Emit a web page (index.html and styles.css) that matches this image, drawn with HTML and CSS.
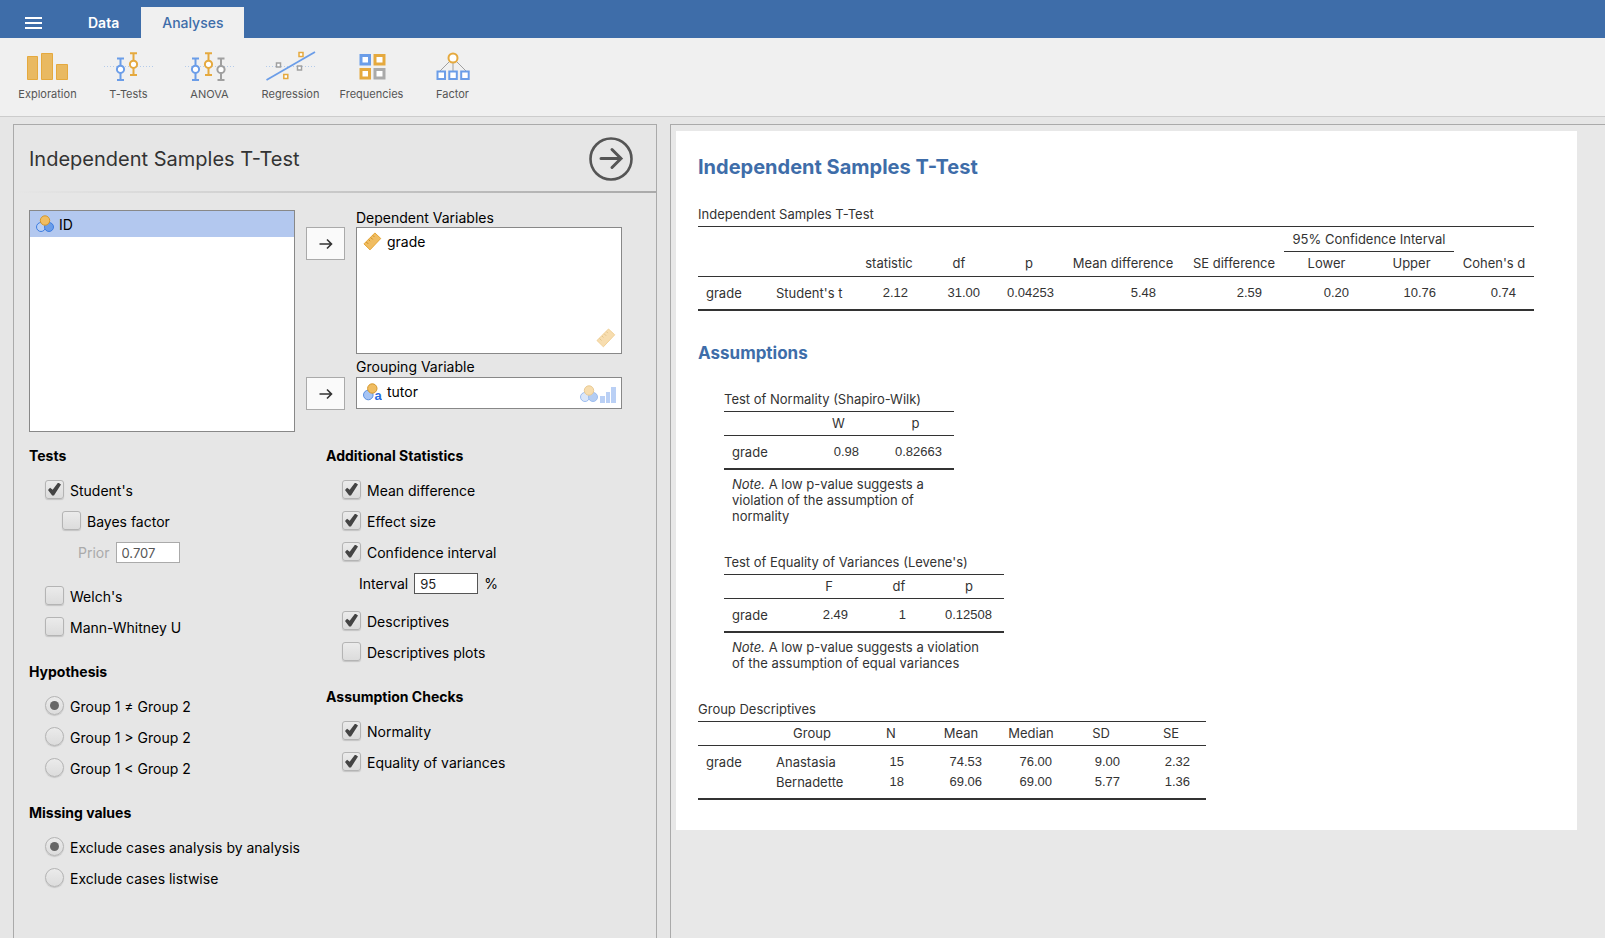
FILE: index.html
```html
<!DOCTYPE html>
<html lang="en">
<head>
    <meta charset="UTF-8">
    <meta name="viewport" content="width=device-width, initial-scale=1.0">
    <title>Independent Samples T-Test</title>
    <link rel="stylesheet" href="styles.css">
</head>
<body>
    <!-- shared icons -->
    <svg class="defs" width="0" height="0" aria-hidden="true">
        <symbol id="arrow" viewBox="0 0 14 12">
            <path d="M0.5 6H12.5M8 1.5L12.5 6L8 10.5" fill="none" stroke="#333" stroke-width="1.6"/>
        </symbol>
        <symbol id="nominal" viewBox="0 0 18 18">
            <circle cx="5" cy="12" r="4.5" fill="#b9d0f5" stroke="#3e7de0"/>
            <circle cx="13" cy="12" r="4.5" fill="#6b9de8" stroke="#3e7de0"/>
            <circle cx="9" cy="5.5" r="4.7" fill="#f0bd62" stroke="#d4972c"/>
        </symbol>
        <symbol id="ruler" viewBox="0 0 20 20">
            <path d="M1 12.5L12.5 1L18.7 6.8L7.4 18.8Z" fill="#f0bd62" stroke="#e5a22e"/>
            <path d="M3.5 10.5l2 2M6 8l1.5 1.5M8.2 5.8l2 2M10.4 3.6l1.5 1.5" fill="none" stroke="#c98a1c"/>
        </symbol>
        <symbol id="ordinal" viewBox="0 0 16 16">
            <path d="M0 9h5v7H0zM6 5h4v11H6zM11 0h5v16h-5z" fill="#77a3ec"/>
        </symbol>
    </svg>

    <header class="topbar">
        <button class="menu" aria-label="Menu">
            <svg width="17" height="12" viewBox="0 0 17 12"><path d="M0 1h17M0 6h17M0 11h17" stroke="#fff" stroke-width="2"/></svg>
        </button>
        <button class="tab">Data</button>
        <button class="tab active">Analyses</button>
    </header>

    <nav class="ribbon">
        <button>
            <svg width="50" height="30" viewBox="0 0 50 30">
                <g fill="#e9b961" stroke="#e5a93e">
                    <path d="M4.5 5.5h10v23h-10zM18.5 2.5h11v26h-11zM33.5 13.5h11v15h-11z"/>
                </g>
            </svg>
            Exploration
        </button>
        <button>
            <svg width="50" height="30" viewBox="0 0 50 30">
                <path d="M0 15.5h50" stroke="#b4cbea" stroke-dasharray="1 2"/>
                <g fill="#fff" stroke="#6b9de8" stroke-width="2">
                    <path d="M16.5 7v22M13 7.5h7M13 29h7"/>
                    <circle cx="16.5" cy="18.3" r="3.6"/>
                </g>
                <g fill="#fff" stroke="#e5a93e" stroke-width="2">
                    <path d="M29.5 2v22M26 2.2h7M26 24h7"/>
                    <circle cx="29.5" cy="13.3" r="3.6"/>
                </g>
            </svg>
            T-Tests
        </button>
        <button>
            <svg width="50" height="30" viewBox="0 0 50 30">
                <path d="M0 15.5h50" stroke="#b4cbea" stroke-dasharray="1 2"/>
                <g fill="#fff" stroke="#6b9de8" stroke-width="2">
                    <path d="M10.5 7v22M7 7.5h7M7 29h7"/>
                    <circle cx="10.5" cy="18.3" r="3.6"/>
                </g>
                <g fill="#fff" stroke="#e5a93e" stroke-width="2">
                    <path d="M23.5 2v22M20 2.2h7M20 24h7"/>
                    <circle cx="23.5" cy="13.3" r="3.6"/>
                </g>
                <g fill="#fff" stroke="#a0a0a0" stroke-width="2">
                    <path d="M36 7v22M32.5 7.5h7M32.5 29h7"/>
                    <circle cx="36" cy="18.5" r="3.6"/>
                </g>
            </svg>
            ANOVA
        </button>
        <button>
            <svg width="50" height="30" viewBox="0 0 50 30">
                <path d="M0 15.5h50" stroke="#b4cbea" stroke-dasharray="1 2"/>
                <path d="M0.5 29L49 1" stroke="#6b9de8" stroke-width="1.8"/>
                <g fill="#fff" stroke-width="1.5">
                    <path d="M10.5 12h4v4h-4zM31.5 15h4v4h-4z" stroke="#a0a0a0"/>
                    <path d="M33 1.5h4v4h-4zM17.8 23.5h4v4h-4z" stroke="#e5a93e"/>
                </g>
            </svg>
            Regression
        </button>
        <button>
            <svg width="50" height="30" viewBox="0 0 50 30">
                <g fill="#fff" stroke-width="3">
                    <path d="M14 4.5h8.5v8.5h-8.5z" stroke="#6b9de8"/>
                    <path d="M28 4.5h9v8.5h-9zM14 18.5h8.5v8.5h-8.5z" stroke="#e5a93e"/>
                    <path d="M28 18.5h9v8.5h-9z" stroke="#aaa"/>
                </g>
            </svg>
            Frequencies
        </button>
        <button>
            <svg width="50" height="30" viewBox="0 0 50 30">
                <path d="M25 8v12M23 9L12 20M27 9L38 20" stroke="#a0a0a0"/>
                <circle cx="25" cy="7" r="4.5" fill="#fff" stroke="#e5a93e" stroke-width="2"/>
                <path d="M9.5 20.5h7.5v7.5h-7.5zM21.3 20.5h7.5v7.5h-7.5zM33.2 20.5h7.5v7.5h-7.5z" fill="#fff" stroke="#6b9de8" stroke-width="2"/>
            </svg>
            Factor
        </button>
    </nav>

    <main class="main">
        <section class="panel">
            <div class="panel-header">
                <h1>Independent Samples T-Test</h1>
                <button class="ok" aria-label="Close options">
                    <svg width="44" height="44" viewBox="0 0 44 44">
                        <g fill="none" stroke="#555" stroke-width="3">
                            <circle cx="22" cy="22" r="20.5" stroke-width="2.6"/>
                            <path d="M12 21.5H32M23 12.5L32 21.5L23 30.5" stroke-linecap="round"/>
                        </g>
                    </svg>
                </button>
            </div>

            <div class="variables">
                <div class="supplier">
                    <div class="variable selected"><svg width="18" height="18"><use href="#nominal"/></svg>ID</div>
                </div>
                <div class="target">
                    <button class="move" aria-label="Move to Dependent Variables"><svg width="14" height="12"><use href="#arrow"/></svg></button>
                    <div class="target-list">
                        <h2>Dependent Variables</h2>
                        <div class="box tall">
                            <div class="variable"><svg width="19" height="19"><use href="#ruler"/></svg>grade</div>
                            <div class="allowed"><svg width="20" height="20"><use href="#ruler"/></svg></div>
                        </div>
                    </div>
                </div>
                <div class="target">
                    <button class="move" aria-label="Move to Grouping Variable"><svg width="14" height="12"><use href="#arrow"/></svg></button>
                    <div class="target-list">
                        <h2>Grouping Variable</h2>
                        <div class="box">
                            <div class="variable">
                                <svg width="19" height="18" viewBox="0 0 19 18">
                                    <circle cx="5.3" cy="12" r="4.8" fill="#a6c4f4" stroke="#5a8fe0"/>
                                    <circle cx="9.3" cy="5.5" r="4.7" fill="#f0bd62" stroke="#d4972c"/>
                                    <text x="11.5" y="17" class="icon-letter">a</text>
                                </svg>
                                tutor
                            </div>
                            <div class="allowed">
                                <svg width="18" height="18"><use href="#nominal"/></svg>
                                <svg width="16" height="16"><use href="#ordinal"/></svg>
                            </div>
                        </div>
                    </div>
                </div>
            </div>

            <form class="options">
                <div class="column">
                    <h3>Tests</h3>
                    <div class="group">
                        <label><input type="checkbox" checked>Student's</label>
                        <label class="sub"><input type="checkbox">Bayes factor</label>
                        <div class="field prior disabled">
                            <label for="prior">Prior</label>
                            <input type="text" id="prior" value="0.707" disabled>
                        </div>
                        <label class="spaced-large"><input type="checkbox">Welch's</label>
                        <label><input type="checkbox">Mann-Whitney U</label>
                    </div>
                    <h3>Hypothesis</h3>
                    <div class="group">
                        <label><input type="radio" name="hypothesis" checked>Group 1 ≠ Group 2</label>
                        <label><input type="radio" name="hypothesis">Group 1 &gt; Group 2</label>
                        <label><input type="radio" name="hypothesis">Group 1 &lt; Group 2</label>
                    </div>
                    <h3>Missing values</h3>
                    <div class="group">
                        <label><input type="radio" name="missing" checked>Exclude cases analysis by analysis</label>
                        <label><input type="radio" name="missing">Exclude cases listwise</label>
                    </div>
                </div>
                <div class="column">
                    <h3>Additional Statistics</h3>
                    <div class="group">
                        <label><input type="checkbox" checked>Mean difference</label>
                        <label><input type="checkbox" checked>Effect size</label>
                        <label><input type="checkbox" checked>Confidence interval</label>
                        <div class="field">
                            <label for="interval">Interval</label>
                            <input type="text" id="interval" value="95">
                            <span>%</span>
                        </div>
                        <label class="spaced"><input type="checkbox" checked>Descriptives</label>
                        <label><input type="checkbox">Descriptives plots</label>
                    </div>
                    <h3>Assumption Checks</h3>
                    <div class="group">
                        <label><input type="checkbox" checked>Normality</label>
                        <label><input type="checkbox" checked>Equality of variances</label>
                    </div>
                </div>
            </form>
        </section>

        <section class="results">
            <article class="page">
                <h1>Independent Samples T-Test</h1>
                <table>
                    <caption>Independent Samples T-Test</caption>
                    <colgroup>
                        <col class="w70"><col class="w88"><col class="w66"><col class="w74"><col class="w66">
                        <col class="w122"><col class="w100"><col class="w85"><col class="w85"><col class="w80">
                    </colgroup>
                    <thead>
                        <tr class="over">
                            <th></th><th></th><th></th><th></th><th></th><th></th><th></th>
                            <th colspan="2" class="span">95% Confidence Interval</th>
                            <th></th>
                        </tr>
                        <tr>
                            <th></th><th></th><th>statistic</th><th>df</th><th>p</th><th>Mean difference</th>
                            <th>SE difference</th><th>Lower</th><th>Upper</th><th>Cohen's d</th>
                        </tr>
                    </thead>
                    <tbody>
                        <tr>
                            <td>grade</td><td>Student's t</td><td class="num r14">2.12</td><td class="num r16">31.00</td>
                            <td class="num r8">0.04253</td><td class="num r28">5.48</td><td class="num r22">2.59</td>
                            <td class="num r20">0.20</td><td class="num r18">10.76</td><td class="num r18">0.74</td>
                        </tr>
                    </tbody>
                </table>

                <h2>Assumptions</h2>
                <div class="nested">
                    <table>
                        <caption>Test of Normality (Shapiro-Wilk)</caption>
                        <colgroup><col class="w76"><col class="w77"><col class="w77"></colgroup>
                        <thead>
                            <tr><th></th><th>W</th><th>p</th></tr>
                        </thead>
                        <tbody>
                            <tr><td>grade</td><td class="num r18">0.98</td><td class="num r12">0.82663</td></tr>
                        </tbody>
                        <tfoot>
                            <tr><td colspan="3"><i>Note.</i> A low p-value suggests a violation of the assumption of normality</td></tr>
                        </tfoot>
                    </table>
                    <table>
                        <caption>Test of Equality of Variances (Levene's)</caption>
                        <colgroup><col class="w70"><col class="w70"><col class="w70"><col class="w70"></colgroup>
                        <thead>
                            <tr><th></th><th>F</th><th>df</th><th>p</th></tr>
                        </thead>
                        <tbody>
                            <tr><td>grade</td><td class="num r16">2.49</td><td class="num r28">1</td><td class="num r12">0.12508</td></tr>
                        </tbody>
                        <tfoot>
                            <tr><td colspan="4"><i>Note.</i> A low p-value suggests a violation of the assumption of equal variances</td></tr>
                        </tfoot>
                    </table>
                </div>

                <table>
                    <caption>Group Descriptives</caption>
                    <colgroup>
                        <col class="w70"><col class="w88"><col class="w70"><col class="w70"><col class="w70"><col class="w70"><col class="w70">
                    </colgroup>
                    <thead>
                        <tr><th></th><th>Group</th><th>N</th><th>Mean</th><th>Median</th><th>SD</th><th>SE</th></tr>
                    </thead>
                    <tbody>
                        <tr>
                            <td>grade</td><td>Anastasia</td><td class="num r22">15</td><td class="num r14">74.53</td>
                            <td class="num r14">76.00</td><td class="num r16">9.00</td><td class="num r16">2.32</td>
                        </tr>
                        <tr>
                            <td></td><td>Bernadette</td><td class="num r22">18</td><td class="num r14">69.06</td>
                            <td class="num r14">69.00</td><td class="num r16">5.77</td><td class="num r16">1.36</td>
                        </tr>
                    </tbody>
                </table>
            </article>
        </section>
    </main>
</body>
</html>
```
FILE: styles.css
```css
*{
    box-sizing: border-box;
}
body{
    margin: 0;
    min-height: 100vh;
    display: flex;
    flex-direction: column;
    background-color: #e6e6e6;
    color: #000;
    font-family: Inter, "Liberation Sans", sans-serif;
    font-size: 14px;
}
h1, h2, h3{
    margin: 0;
}
button{
    font-family: inherit;
    border: none;
    padding: 0;
    background: none;
}
svg{
    display: block;
    flex: none;
}
.defs{
    position: absolute;
}
.icon-letter{
    font: bold 13px "Liberation Sans", sans-serif;
    fill: #2a6be0;
}

/* top bar */
.topbar{
    display: flex;
    align-items: flex-end;
    height: 38px;
    background-color: #3e6da9;
}
.menu{
    display: flex;
    align-items: center;
    justify-content: center;
    width: 66px;
    height: 31px;
}
.tab{
    height: 31px;
    padding: 0 22px;
    color: #fff;
    font-size: 14px;
    font-weight: 600;
}
.tab.active{
    padding: 0 21px;
    background-color: #f0f0f0;
    color: #3e6da9;
    font-weight: 500;
}

/* ribbon */
.ribbon{
    display: grid;
    grid-template-columns: repeat(6, 81px);
    height: 79px;
    padding-left: 7px;
    background-color: #f0f0f0;
    border-bottom: 1px solid #ccc;
}
.ribbon button{
    display: flex;
    flex-direction: column;
    align-items: center;
    gap: 5px;
    padding-top: 13px;
    color: #555;
    font-size: 11px;
    line-height: 16px;
}

.main{
    flex: 1;
    display: grid;
    grid-template-columns: 644fr 935fr;
    gap: 13px;
    padding: 7px 0 0 13px;
}

/* options panel */
.panel{
    border: 1px solid #aaa;
    border-bottom: none;
}
.panel-header{
    display: flex;
    align-items: center;
    justify-content: space-between;
    height: 68px;
    padding: 2px 23px 0 15px;
    border-bottom: 2px solid;
    border-image: linear-gradient(to right, #e6e6e6, #aaa) 1;
}
.panel-header h1{
    color: #333;
    font-size: 20px;
    font-weight: 400;
}
.variables{
    display: grid;
    grid-template-columns: minmax(0, 266fr) minmax(0, 316fr);
    grid-template-rows: auto 1fr;
    column-gap: 11px;
    padding: 17px 34px 0 15px;
}
.supplier{
    grid-row: span 2;
    background-color: #fff;
    border: 1px solid #888;
    height: 222px;
}
.target{
    display: flex;
    gap: 11px;
}
.target-list{
    flex: 1;
}
.target h2{
    height: 17px;
    font-size: 14px;
    font-weight: 400;
    line-height: 16px;
}
.target + .target h2{
    height: 23px;
    line-height: 26px;
}
.target + .target .move{
    margin-top: 23px;
}
.move{
    display: flex;
    align-items: center;
    justify-content: center;
    width: 39px;
    height: 33px;
    margin-top: 17px;
    background-color: #fafafa;
    border: 1px solid #aaa;
}
.box{
    position: relative;
    height: 32px;
    background-color: #fff;
    border: 1px solid #888;
}
.box.tall{
    height: 127px;
}
.variable{
    display: flex;
    align-items: center;
    gap: 5px;
    height: 27px;
    padding-left: 6px;
}
.variable.selected{
    height: 26px;
    background-color: #b3c8ef;
}
.allowed{
    position: absolute;
    right: 5px;
    bottom: 5px;
    display: flex;
    align-items: flex-end;
    gap: 2px;
    opacity: 0.5;
}

.options{
    display: grid;
    grid-template-columns: 297fr 330fr;
    padding: 14px 0 0 15px;
}
.options h3{
    font-size: 14px;
    font-weight: 700;
    line-height: 20px;
    margin-bottom: 9px;
}
.group{
    display: flex;
    flex-direction: column;
    padding-left: 16px;
    margin-bottom: 19px;
}
.group > label{
    display: flex;
    align-items: center;
    gap: 6px;
    height: 31px;
}
.group > .sub{
    padding-left: 17px;
}
.group > .spaced{
    margin-top: 7px;
}
.group > .spaced-large{
    margin-top: 13px;
}
.field{
    display: flex;
    align-items: center;
    gap: 6px;
    height: 31px;
    padding-left: 17px;
}
.field.prior{
    padding-left: 33px;
}
.field.disabled{
    color: #aaa;
}
.field input{
    width: 64px;
    height: 21px;
    padding: 0 5px;
    border: 1px solid #555;
    background-color: #fff;
    color: #222;
    font-family: inherit;
    font-size: 13px;
}
.field input:disabled{
    border-color: #aaa;
    color: #555;
}
input[type="checkbox"], input[type="radio"]{
    appearance: none;
    display: grid;
    place-items: center;
    flex: none;
    width: 19px;
    height: 19px;
    margin: 0 0 3px;
    border: 1px solid #b4b4b4;
    border-radius: 3px;
    background: linear-gradient(#ebebeb, #dcdcdc);
    box-shadow: 0 1px 1px #c4c4c4;
}
input[type="radio"]{
    border-radius: 50%;
}
input[type="checkbox"]:checked::before{
    content: "";
    width: 13px;
    height: 13px;
    background-color: #444;
    clip-path: polygon(0 58%, 16% 40%, 36% 56%, 78% 0, 100% 16%, 46% 100%, 32% 100%);
}
input[type="radio"]:checked::before{
    content: "";
    width: 9px;
    height: 9px;
    border-radius: 50%;
    background-color: #666;
}

/* results */
.results{
    border-top: 1px solid #aaa;
    border-left: 1px solid #aaa;
    background-color: #e8e8e8;
    padding: 6px 28px 0 5px;
}
.page{
    background-color: #fff;
    color: #333;
    padding: 24px 22px 30px;
    font-size: 13px;
}
.page h1{
    color: #3e6da9;
    font-size: 20px;
    font-weight: 700;
    line-height: 24px;
    margin-bottom: 27px;
}
.page h2{
    color: #3e6da9;
    font-size: 17px;
    font-weight: 700;
    line-height: 20px;
    margin: 32px 0 28px;
}
.nested{
    display: flex;
    flex-direction: column;
    align-items: flex-start;
    gap: 30px;
    padding-left: 26px;
    margin-bottom: 30px;
}
table{
    table-layout: fixed;
    width: 1px;
    border-spacing: 0;
    line-height: 16px;
}
caption{
    text-align: left;
    padding-bottom: 4px;
    white-space: nowrap;
}
th{
    height: 25px;
    padding: 0 0 2px;
    font-weight: 400;
    white-space: nowrap;
    border-bottom: 1px solid #333;
}
thead tr:first-child th{
    border-top: 1px solid #333;
}
.over th{
    height: 26px;
    border-bottom: none;
}
.over .span{
    padding: 0;
    border-bottom: 1px solid #333;
}
td{
    padding: 2px 0 2px 8px;
    white-space: nowrap;
}
tbody tr:first-child td{
    padding-top: 8px;
}
tbody tr:last-child td{
    padding-bottom: 8px;
    border-bottom: 2px solid #333;
}
tfoot td{
    padding: 6px 20px 0 8px;
    white-space: normal;
}
.num{
    font-family: "Liberation Sans", sans-serif;
    text-align: right;
}
td.r8{ padding-right: 8px; }
td.r12{ padding-right: 12px; }
td.r14{ padding-right: 14px; }
td.r16{ padding-right: 16px; }
td.r18{ padding-right: 18px; }
td.r20{ padding-right: 20px; }
td.r22{ padding-right: 22px; }
td.r28{ padding-right: 28px; }
.w66{ width: 66px; }
.w70{ width: 70px; }
.w74{ width: 74px; }
.w76{ width: 76px; }
.w77{ width: 77px; }
.w80{ width: 80px; }
.w85{ width: 85px; }
.w88{ width: 88px; }
.w100{ width: 100px; }
.w122{ width: 122px; }
```
